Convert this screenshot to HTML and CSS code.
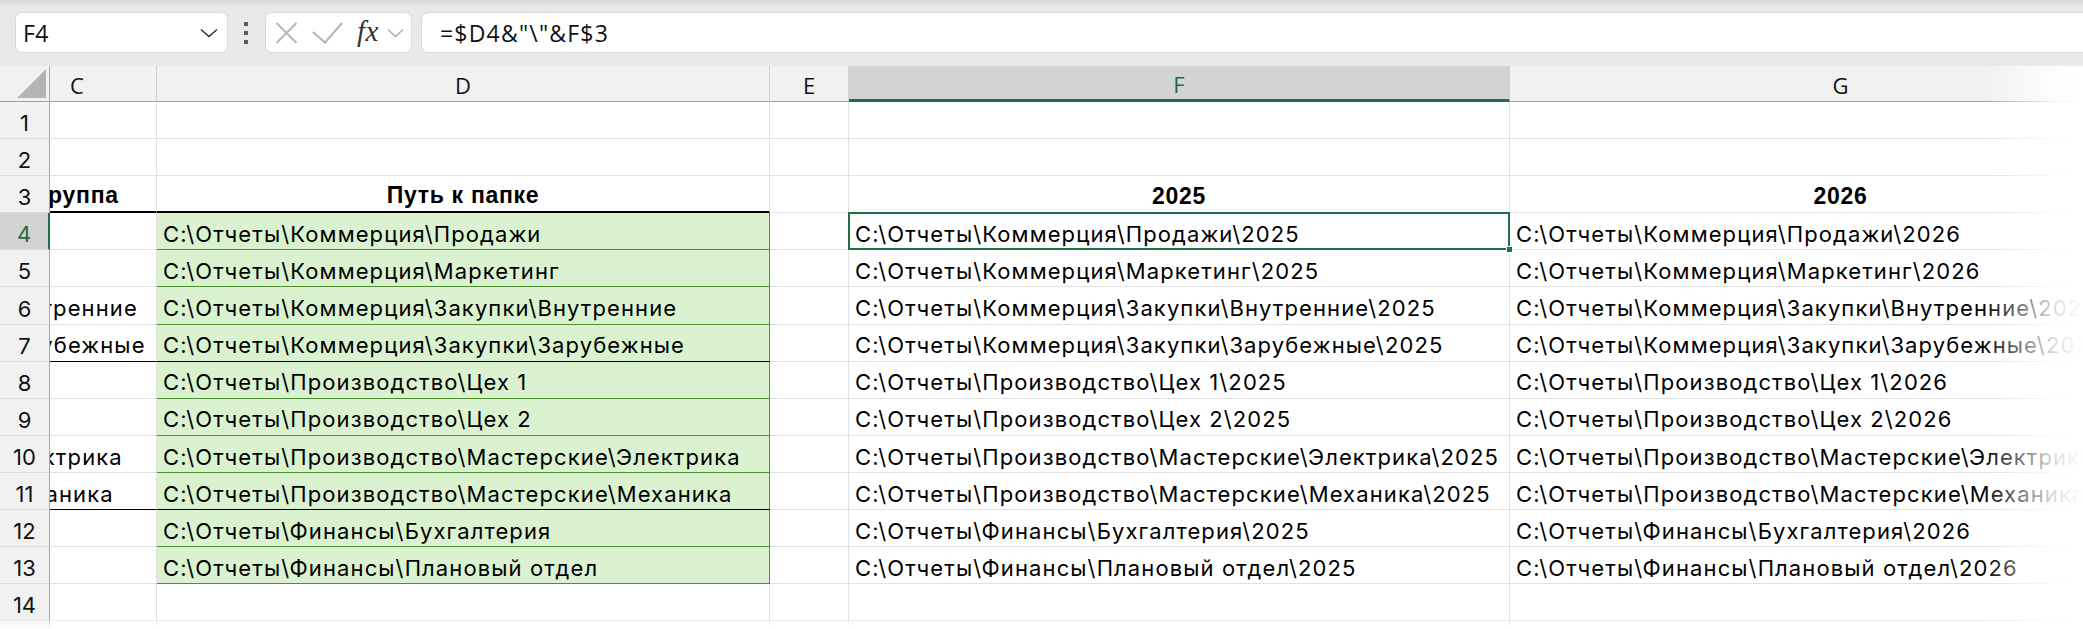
FILE: index.html
```html
<!DOCTYPE html>
<html lang="ru">
<head>
<meta charset="utf-8">
<title>Excel</title>
<link rel="stylesheet" href="styles.css">
</head>
<body>
<div class="app">
  <div class="toolbar">
    <div class="namebox">
      <span class="nb-text">F4</span>
      <svg class="nb-chev" width="18" height="10" viewBox="0 0 18 10"><path d="M1 1.5 L9 8.5 L17 1.5" fill="none" stroke="#333" stroke-width="1.6"/></svg>
    </div>
    <div class="dots"><i></i><i></i><i></i></div>
    <div class="fxbox">
      <svg class="ic-x" width="23" height="22" viewBox="0 0 23 22"><path d="M1.5 1 L21.5 21 M21.5 1 L1.5 21" fill="none" stroke="#b5b5b5" stroke-width="2"/></svg>
      <svg class="ic-check" width="31" height="22" viewBox="0 0 31 22"><path d="M1 10 L13 20.5 L30 1" fill="none" stroke="#b5b5b5" stroke-width="2"/></svg>
      <span class="fx">fx</span>
      <svg class="fx-chev" width="17" height="10" viewBox="0 0 17 10"><path d="M1 1.5 L8.5 8.5 L16 1.5" fill="none" stroke="#ababab" stroke-width="1.5"/></svg>
    </div>
    <div class="formula">=$D4&amp;"\"&amp;F$3</div>
  </div>

  <div class="sheet">
    <div class="grid">
      <!-- header row -->
      <div class="corner"><span class="tri"></span></div>
      <div class="ch ch-c"><span class="cwide">C</span></div>
      <div class="ch">D</div>
      <div class="ch">E</div>
      <div class="ch ch-sel">F</div>
      <div class="ch">G</div>

      <!-- row 1 -->
      <div class="rh">1</div>
      <div class="cell"></div><div class="cell"></div><div class="cell"></div><div class="cell"></div><div class="cell"></div>
      <!-- row 2 -->
      <div class="rh">2</div>
      <div class="cell"></div><div class="cell"></div><div class="cell"></div><div class="cell"></div><div class="cell"></div>
      <!-- row 3 -->
      <div class="rh">3</div>
      <div class="cell c-col b-top-next"><span class="cwide bold center">Группа</span></div>
      <div class="cell bold center b-top-next">Путь к папке</div>
      <div class="cell"></div>
      <div class="cell bold center">2025</div>
      <div class="cell bold center">2026</div>
      <!-- row 4 -->
      <div class="rh rh-sel">4</div>
      <div class="cell c-col"></div>
      <div class="cell path">C:\Отчеты\Коммерция\Продажи</div>
      <div class="cell"></div>
      <div class="cell active">C:\Отчеты\Коммерция\Продажи\2025<span class="handle"></span></div>
      <div class="cell">C:\Отчеты\Коммерция\Продажи\2026</div>
      <!-- row 5 -->
      <div class="rh">5</div>
      <div class="cell c-col"></div>
      <div class="cell path">C:\Отчеты\Коммерция\Маркетинг</div>
      <div class="cell"></div>
      <div class="cell">C:\Отчеты\Коммерция\Маркетинг\2025</div>
      <div class="cell">C:\Отчеты\Коммерция\Маркетинг\2026</div>
      <!-- row 6 -->
      <div class="rh">6</div>
      <div class="cell c-col"><span class="cwide">Внутренние</span></div>
      <div class="cell path">C:\Отчеты\Коммерция\Закупки\Внутренние</div>
      <div class="cell"></div>
      <div class="cell">C:\Отчеты\Коммерция\Закупки\Внутренние\2025</div>
      <div class="cell">C:\Отчеты\Коммерция\Закупки\Внутренние\2026</div>
      <!-- row 7 -->
      <div class="rh">7</div>
      <div class="cell c-col b-group"><span class="cwide">Зарубежные</span></div>
      <div class="cell path b-group">C:\Отчеты\Коммерция\Закупки\Зарубежные</div>
      <div class="cell"></div>
      <div class="cell">C:\Отчеты\Коммерция\Закупки\Зарубежные\2025</div>
      <div class="cell">C:\Отчеты\Коммерция\Закупки\Зарубежные\2026</div>
      <!-- row 8 -->
      <div class="rh">8</div>
      <div class="cell c-col"></div>
      <div class="cell path">C:\Отчеты\Производство\Цех 1</div>
      <div class="cell"></div>
      <div class="cell">C:\Отчеты\Производство\Цех 1\2025</div>
      <div class="cell">C:\Отчеты\Производство\Цех 1\2026</div>
      <!-- row 9 -->
      <div class="rh">9</div>
      <div class="cell c-col"></div>
      <div class="cell path">C:\Отчеты\Производство\Цех 2</div>
      <div class="cell"></div>
      <div class="cell">C:\Отчеты\Производство\Цех 2\2025</div>
      <div class="cell">C:\Отчеты\Производство\Цех 2\2026</div>
      <!-- row 10 -->
      <div class="rh">10</div>
      <div class="cell c-col"><span class="cwide">Электрика</span></div>
      <div class="cell path">C:\Отчеты\Производство\Мастерские\Электрика</div>
      <div class="cell"></div>
      <div class="cell">C:\Отчеты\Производство\Мастерские\Электрика\2025</div>
      <div class="cell">C:\Отчеты\Производство\Мастерские\Электрика\2026</div>
      <!-- row 11 -->
      <div class="rh">11</div>
      <div class="cell c-col b-group"><span class="cwide">Механика</span></div>
      <div class="cell path b-group">C:\Отчеты\Производство\Мастерские\Механика</div>
      <div class="cell"></div>
      <div class="cell">C:\Отчеты\Производство\Мастерские\Механика\2025</div>
      <div class="cell">C:\Отчеты\Производство\Мастерские\Механика\2026</div>
      <!-- row 12 -->
      <div class="rh">12</div>
      <div class="cell c-col"></div>
      <div class="cell path">C:\Отчеты\Финансы\Бухгалтерия</div>
      <div class="cell"></div>
      <div class="cell">C:\Отчеты\Финансы\Бухгалтерия\2025</div>
      <div class="cell">C:\Отчеты\Финансы\Бухгалтерия\2026</div>
      <!-- row 13 -->
      <div class="rh">13</div>
      <div class="cell c-col"></div>
      <div class="cell path">C:\Отчеты\Финансы\Плановый отдел</div>
      <div class="cell"></div>
      <div class="cell">C:\Отчеты\Финансы\Плановый отдел\2025</div>
      <div class="cell">C:\Отчеты\Финансы\Плановый отдел\2026</div>
      <!-- row 14 -->
      <div class="rh">14</div>
      <div class="cell"></div><div class="cell"></div><div class="cell"></div><div class="cell"></div><div class="cell"></div>
      <!-- row 15 -->
      <div class="rh">15</div>
      <div class="cell"></div><div class="cell"></div><div class="cell"></div><div class="cell"></div><div class="cell"></div>
    </div>
    <div class="fade-right"></div>
    <div class="fade-bottom"></div>
  </div>
</div>
</body>
</html>
```

FILE: styles.css
```css
* { box-sizing: border-box; }
html, body { margin: 0; padding: 0; background: #fff; }
body { width: 2083px; height: 629px; overflow: hidden; }
.app { width: 2083px; height: 629px; overflow: hidden; font-family: Inter, "Liberation Sans", sans-serif; color: #000; }

/* toolbar */
.toolbar {
  height: 66px;
  display: flex;
  align-items: center;
  padding-left: 15px;
  background: linear-gradient(to bottom, #d9d9db 0px, #e7e8ea 7px, #e8e9eb 100%);
}
.namebox {
  width: 213px; height: 41px;
  background: #fff;
  border: 1px solid #d9d9d9;
  border-radius: 7px;
  display: flex; align-items: center;
  padding-left: 7px;
  margin-top: -1px;
}
.nb-text { font-family: "Open Sans", sans-serif; font-size: 23px; color: #111; flex: 1; letter-spacing: 0.5px; }
.nb-chev { margin-right: 9px; }
.dots { width: 5px; margin-left: 16px; display: flex; flex-direction: column; gap: 5px; }
.dots i { display: block; width: 4px; height: 4px; background: #595959; border-radius: 0.5px; }
.fxbox {
  width: 147px; height: 41px;
  margin-left: 16px;
  margin-top: -1px;
  background: #fff;
  border: 1px solid #d9d9d9;
  border-radius: 7px;
  display: flex; align-items: center;
  padding-left: 9px;
}
.ic-check { margin-left: 14px; }
.fx { font-family: "Liberation Serif", serif; font-style: italic; font-size: 29px; color: #333; margin-left: 14px; margin-top: -3px; letter-spacing: 0.5px; }
.fx-chev { margin-left: 8px; }
.formula {
  flex: 1;
  height: 41px;
  margin-left: 9px;
  margin-right: -20px;
  margin-top: -1px;
  background: #fff;
  border: 1px solid #d9d9d9;
  border-radius: 7px;
  display: flex; align-items: center;
  padding-left: 18px;
  font-family: "Open Sans", sans-serif;
  font-size: 23px;
  letter-spacing: 1.2px;
  color: #111;
}

/* sheet */
.sheet { position: relative; height: 563px; overflow: hidden; }
.grid {
  display: grid;
  grid-template-columns: 50px 107px 613px 79px 661px 662px;
  grid-template-rows: 36px repeat(15, 37.1px);
  width: 2172px;
}
.corner {
  background: #f1f1f1;
  border-right: 1px solid #a8a8a8;
  border-bottom: 1px solid #a0a0a0;
  position: relative;
}
.tri {
  position: absolute; right: 3px; bottom: 3px;
  width: 0; height: 0;
  border-left: 29px solid transparent;
  border-bottom: 29px solid #b4b4b4;
}
.ch {
  background: #f1f1f1;
  border-right: 1px solid #d0d0d0;
  border-bottom: 1px solid #a0a0a0;
  display: flex; align-items: flex-end; justify-content: center;
  font-family: "Open Sans", sans-serif;
  font-size: 22px;
  padding-bottom: 1px;
  color: #111;
  overflow: hidden;
  white-space: nowrap;
}
.ch-c { justify-content: flex-start; }
.ch-c .cwide { text-align: center; padding-left: 0; letter-spacing: 0; margin-left: -53px; }
.ch-sel {
  background: #d3d3d3;
  color: #1e6b3e;
  border-bottom: 3px solid #1f7145;
  padding-bottom: 0;
}
.rh {
  background: #f1f1f1;
  border-right: 1px solid #a8a8a8;
  border-bottom: 1px solid #dcdcdc;
  display: flex; align-items: flex-end; justify-content: center;
  font-size: 22px;
  padding-bottom: 2px;
  color: #111;
}
.rh-sel { background: #d3d3d3; color: #1e6b3e; border-right: 2px solid #1f7145; }

.cell {
  border-right: 1px solid #e1e1e1;
  border-bottom: 1px solid #e1e1e1;
  display: flex; align-items: flex-end;
  padding: 0 6px 2px 6px;
  font-size: 22px;
  letter-spacing: 1.1px;
  white-space: nowrap;
  overflow: hidden;
  line-height: 1.2;
}
.bold { font-weight: 700; font-family: "Liberation Sans", Arial, sans-serif; font-size: 23px; letter-spacing: 0.7px; }
.center { justify-content: center; }
.c-col { padding-left: 0; padding-right: 0; }
.cwide { display: block; flex: none; width: 160px; margin-left: -57px; padding-left: 5px; }
.cwide.center { text-align: center; padding-left: 0; margin-left: -53px; }
.b-top-next { border-bottom: 2px solid #000; }
.b-group { border-bottom: 1px solid #000; }
.path { background: #daf2d0; border-bottom-color: #4e8f30; border-right-color: #4e8f30; }
.path.b-group { border-bottom-color: #000; }
.active { position: relative; overflow: visible; z-index: 2; }
.active::after {
  content: "";
  position: absolute;
  left: -1px; top: -1px; right: -1px; bottom: -1px;
  border: 2px solid #1f7145;
  pointer-events: none;
}
.handle {
  position: absolute;
  right: -4px; bottom: -4px;
  width: 7px; height: 7px;
  background: #1f7145;
  border: 1px solid #fff;
  z-index: 3;
}

.fade-right {
  position: absolute; top: 0; right: 0; bottom: 0;
  width: 100px;
  background: linear-gradient(to right, rgba(255,255,255,0) 0%, rgba(255,255,255,0.85) 70%, #fff 100%);
  z-index: 5;
}
.fade-bottom {
  position: absolute; left: 0; right: 0; bottom: 0;
  height: 9px;
  background: linear-gradient(to bottom, rgba(255,255,255,0.3), #fff);
  z-index: 5;
}
```
